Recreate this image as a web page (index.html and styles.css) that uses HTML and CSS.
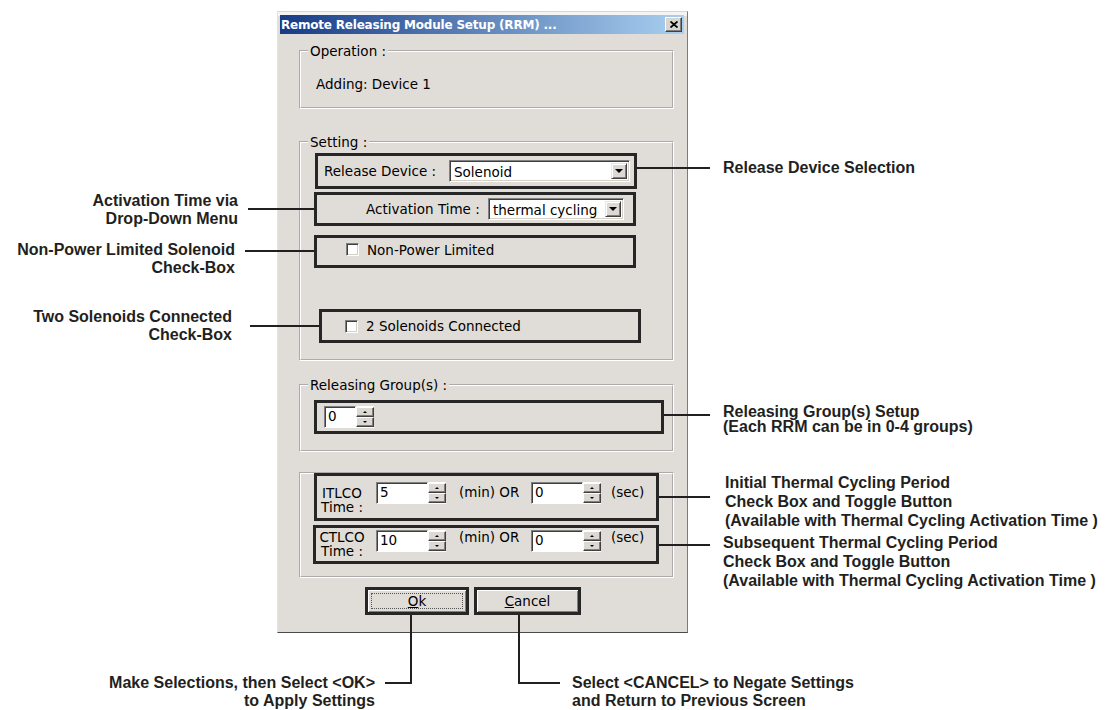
FILE: index.html
```html
<!DOCTYPE html>
<html>
<head>
  <title>Remote Releasing Module Setup (RRM)</title>
  <link rel="stylesheet" href="styles.css">
</head>
<body>
  <div class="figure">
    <div class="figure-row">
      <!--left notes-->
      <div class="notes-left">
        <p class="note note-act">Activation Time via<br>Drop-Down Menu</p>
        <p class="note note-npl">Non-Power Limited Solenoid<br>Check-Box</p>
        <p class="note note-two">Two Solenoids Connected<br>Check-Box</p>
      </div>

      <!--dialog-->
      <div class="dialog">
        <div class="titlebar">
          <span class="title">Remote Releasing Module Setup (RRM) ...</span>
          <span class="close-btn">
            <svg width="8" height="7" viewBox="0 0 8 7"><path d="M0.5 0.5 L7.5 6.5 M7.5 0.5 L0.5 6.5" stroke="#000" stroke-width="1.8" fill="none"/></svg>
          </span>
        </div>

        <div class="dialog-body">
          <fieldset class="group group-op">
            <legend>Operation :</legend>
            <p class="op-text">Adding: Device 1</p>
          </fieldset>

          <fieldset class="group group-set">
            <legend>Setting :</legend>
            <div class="mark mark-device">
              <span>Release Device :</span>
              <div class="combo combo-device"><span class="combo-text">Solenoid</span><span class="combo-btn"></span></div>
            </div>
            <div class="mark mark-act">
              <span>Activation Time :</span>
              <div class="combo combo-act"><span class="combo-text">thermal cycling</span><span class="combo-btn"></span></div>
            </div>
            <div class="mark mark-npl">
              <span class="check"></span>
              <span>Non-Power Limited</span>
            </div>
            <div class="mark mark-two">
              <span class="check"></span>
              <span>2 Solenoids Connected</span>
            </div>
          </fieldset>

          <fieldset class="group group-rel">
            <legend>Releasing Group(s) :</legend>
            <div class="mark mark-grp">
              <div class="spin">
                <span class="spin-field">0</span>
                <span class="spin-btns"><span class="spin-btn spin-up"></span><span class="spin-btn spin-down"></span></span>
              </div>
            </div>
          </fieldset>

          <fieldset class="group group-time">
            <div class="mark mark-time mark-itl">
              <span class="time-label">ITLCO<br>Time :</span>
              <div class="spin spin-wide">
                <span class="spin-field">5</span>
                <span class="spin-btns"><span class="spin-btn spin-up"></span><span class="spin-btn spin-down"></span></span>
              </div>
              <span class="time-unit">(min) OR</span>
              <div class="spin spin-wide">
                <span class="spin-field">0</span>
                <span class="spin-btns"><span class="spin-btn spin-up"></span><span class="spin-btn spin-down"></span></span>
              </div>
              <span class="time-sec">(sec)</span>
            </div>
            <div class="mark mark-time mark-ctl">
              <span class="time-label">CTLCO<br>Time :</span>
              <div class="spin spin-wide">
                <span class="spin-field">10</span>
                <span class="spin-btns"><span class="spin-btn spin-up"></span><span class="spin-btn spin-down"></span></span>
              </div>
              <span class="time-unit">(min) OR</span>
              <div class="spin spin-wide">
                <span class="spin-field">0</span>
                <span class="spin-btns"><span class="spin-btn spin-up"></span><span class="spin-btn spin-down"></span></span>
              </div>
              <span class="time-sec">(sec)</span>
            </div>
          </fieldset>

          <div class="buttons">
            <span class="btn btn-ok"><span><u>O</u>k</span></span>
            <span class="btn btn-cancel"><span><u>C</u>ancel</span></span>
          </div>
        </div>
      </div><!--dialog-->

      <!--right notes-->
      <div class="notes-right">
        <p class="note note-dev">Release Device Selection</p>
        <p class="note note-grp">Releasing Group(s) Setup<br>(Each RRM can be in 0-4 groups)</p>
        <p class="note note-itl">Initial Thermal Cycling Period<br>Check Box and Toggle Button<br>(Available with Thermal Cycling Activation Time )</p>
        <p class="note note-ctl">Subsequent Thermal Cycling Period<br>Check Box and Toggle Button<br>(Available with Thermal Cycling Activation Time )</p>
      </div>
    </div>

    <!--bottom notes-->
    <div class="figure-bottom">
      <p class="note note-ok">Make Selections, then Select &lt;OK&gt;<br>to Apply Settings</p>
      <p class="note note-cancel">Select &lt;CANCEL&gt; to Negate Settings<br>and Return to Previous Screen</p>
    </div>
  </div>
</body>
</html>
```

FILE: styles.css
```css
html, body {
  margin: 0;
  padding: 0;
  background: #fff;
}
body {
  font-family: "DejaVu Sans", sans-serif;
  font-size: 13.5px;
  color: #000;
}
.figure-row {
  display: flex;
  align-items: flex-start;
}

/* notes */
.note {
  margin: 0;
  font-family: "Liberation Sans", Arial, sans-serif;
  font-weight: bold;
  font-size: 16px;
  line-height: 18px;
  color: #231f20;
  white-space: nowrap;
}
.notes-left {
  width: 277px;
  flex: none;
}
.notes-left .note {
  text-align: right;
}
.note-act {
  margin-top: 192px;
  padding-right: 39px;
}
.note-npl {
  margin-top: 13px;
  padding-right: 42px;
}
.note-two {
  margin-top: 31px;
  padding-right: 45px;
}
.notes-right {
  padding-left: 35px;
}
.note-dev {
  margin-top: 159px;
}
.note-grp {
  margin-top: 227px;
  line-height: 15px;
}
.note-itl {
  margin-top: 39px;
  padding-left: 2px;
  line-height: 19px;
}
.note-ctl {
  margin-top: 3px;
  line-height: 19px;
}
.figure-bottom {
  display: flex;
  margin-top: 41px;
}
.note-ok {
  width: 375px;
  text-align: right;
}
.note-cancel {
  margin-left: 197px;
}

/* dialog */
.dialog {
  width: 411px;
  flex: none;
  box-sizing: border-box;
  margin-top: 11px;
  border: 1px solid;
  border-color: #d6d6d6 #7a7a7a #4a4a4a #e4e4e4;
  background: #e0ddd8;
  box-shadow: inset 0 4px 0 #f4f4f4;
}
.titlebar {
  display: flex;
  align-items: center;
  justify-content: space-between;
  height: 19px;
  margin: 3px 3px 0 2px;
  padding-left: 1px;
  background: linear-gradient(to right, #173b85, #a9d0f0);
}
.title {
  color: #fff;
  font-weight: bold;
  font-size: 12px;
  letter-spacing: -0.2px;
}
.close-btn {
  display: flex;
  align-items: center;
  justify-content: center;
  box-sizing: border-box;
  width: 17px;
  height: 15px;
  margin-right: 2px;
  background: #d8d5d0;
  border: 1px solid;
  border-color: #fff #404040 #404040 #fff;
  box-shadow: inset -1px -1px 0 #808080;
}
.dialog-body {
  padding: 0 13px 17px 21px;
}

/* group boxes */
.group {
  margin: 0;
  padding: 0;
  min-width: 0;
  box-sizing: border-box;
  border: 2px groove #fff;
}
.group legend {
  margin-left: 7px;
  padding: 0 2px;
  line-height: 14px;
}
.group-op {
  height: 65px;
  margin-top: 10px;
}
.group-set {
  height: 226px;
  margin-top: 26px;
}
.group-rel {
  height: 74px;
  margin-top: 17px;
}
.group-time {
  height: 106px;
  margin-top: 20px;
}
.op-text {
  margin: 19px 0 0 15px;
  line-height: 14px;
}

/* highlight boxes */
.mark {
  position: relative;
  display: flex;
  align-items: center;
  box-sizing: border-box;
  border: 3px solid #262626;
}
.mark::after {
  content: "";
  position: absolute;
  border-top: 2px solid #231f20;
}
.mark-device {
  width: 322px;
  height: 36px;
  margin: 4px 0 0 14px;
  padding: 0 4px 0 6px;
  justify-content: space-between;
}
.mark-device::after {
  left: calc(100% + 3px);
  top: 11px;
  width: 73px;
}
.mark-act {
  width: 322px;
  height: 34px;
  margin: 3px 0 0 13px;
  padding: 0 9px 0 49px;
}
.mark-act .combo {
  margin-left: auto;
}
.mark-act::after {
  right: calc(100% + 3px);
  top: 13px;
  width: 66px;
}
.mark-npl {
  width: 322px;
  height: 33px;
  margin: 9px 0 0 13px;
  padding: 0 0 4px 29px;
}
.mark-npl::after {
  right: calc(100% + 3px);
  top: 12px;
  width: 69px;
}
.mark-two {
  width: 322px;
  height: 34px;
  margin: 41px 0 0 18px;
  padding-left: 23px;
}
.mark-two::after {
  right: calc(100% + 3px);
  top: 13px;
  width: 69px;
}
.mark-grp {
  width: 350px;
  height: 34px;
  margin: 8px 0 0 13px;
  padding-left: 7px;
}
.mark-grp::after {
  left: calc(100% + 3px);
  top: 11px;
  width: 46px;
}
.mark-time {
  align-items: flex-start;
}
.mark-itl {
  width: 345px;
  height: 48px;
  margin: -1px 0 0 13px;
  padding-top: 6px;
}
.mark-itl::after {
  left: calc(100% + 3px);
  top: 20px;
  width: 51px;
}
.mark-ctl {
  width: 346px;
  height: 39px;
  margin: 4px 0 0 12px;
  padding-top: 2px;
}
.mark-ctl::after {
  left: calc(100% + 3px);
  top: 16px;
  width: 51px;
}
.time-label {
  flex: none;
  width: 46px;
  margin: 4px 0 0 2px;
  text-align: center;
  line-height: 14px;
}
.mark-ctl .time-label {
  margin: 0 0 0 3px;
}
.mark-time .spin {
  margin-left: 11px;
}
.time-unit {
  flex: none;
  width: 72px;
  margin: 3px 0 0 13px;
  line-height: 14px;
}
.mark-time .time-unit + .spin {
  margin-left: 0;
}
.time-sec {
  margin: 3px 0 0 10px;
  line-height: 14px;
}
.mark-ctl .time-unit,
.mark-ctl .time-sec {
  margin-top: 0;
}

/* controls */
.combo {
  display: flex;
  flex: none;
  box-sizing: border-box;
  height: 22px;
  padding: 2px;
  background: #fff;
  border: 1px solid;
  border-color: #808080 #fff #fff #808080;
  box-shadow: inset 1px 1px 0 #404040, inset -1px -1px 0 #d4d0c8;
}
.combo-device {
  width: 181px;
}
.combo-act {
  width: 136px;
}
.combo-text {
  flex: 1;
  padding-left: 2px;
  line-height: 18px;
  white-space: nowrap;
}
.combo-btn {
  display: flex;
  align-items: center;
  justify-content: center;
  box-sizing: border-box;
  width: 16px;
  background: #dcd9d4;
  border: 1px solid;
  border-color: #e8e6e2 #404040 #404040 #e8e6e2;
  box-shadow: inset 1px 1px 0 #fff, inset -1px -1px 0 #808080;
}
.combo-btn::after {
  content: "";
  border-top: 4px solid #000;
  border-left: 4px solid transparent;
  border-right: 4px solid transparent;
}
.check {
  width: 13px;
  height: 13px;
  flex: none;
  box-sizing: border-box;
  margin-right: 8px;
  background: #fff;
  border: 1px solid;
  border-color: #808080 #fff #fff #808080;
  box-shadow: inset 1px 1px 0 #404040, inset -1px -1px 0 #d4d0c8;
}
.spin {
  display: flex;
  flex: none;
  height: 22px;
}
.spin-field {
  width: 32px;
  box-sizing: border-box;
  padding-left: 3px;
  line-height: 18px;
  background: #fff;
  border: 1px solid;
  border-color: #808080 #fff #fff #808080;
  box-shadow: inset 1px 1px 0 #404040;
}
.spin-wide .spin-field {
  width: 52px;
}
.spin-btns {
  display: flex;
  flex-direction: column;
  width: 18px;
  padding: 1px 0;
  box-sizing: border-box;
  background: #fff;
}
.spin-btn {
  flex: 1;
  display: flex;
  align-items: center;
  justify-content: center;
  box-sizing: border-box;
  background: #dcd9d4;
  border: 1px solid;
  border-color: #fff #404040 #404040 #fff;
  box-shadow: inset -1px -1px 0 #808080;
}
.spin-btn::after {
  content: "";
  border-left: 2px solid transparent;
  border-right: 2px solid transparent;
}
.spin-up::after {
  border-bottom: 2px solid #000;
}
.spin-down::after {
  border-top: 2px solid #000;
}

/* buttons */
.buttons {
  display: flex;
  gap: 5px;
  margin-top: 9px;
  padding-left: 66px;
}
.btn {
  position: relative;
  display: flex;
  align-items: center;
  justify-content: center;
  box-sizing: border-box;
  height: 28px;
  border: 3px solid #262626;
  background: #e0ddd8;
  box-shadow: inset 1px 1px 0 #fff, inset -1px -1px 0 #808080;
}
.btn-ok {
  width: 104px;
}
.btn-cancel {
  width: 107px;
}
.btn-ok::before {
  content: "";
  position: absolute;
  top: 3px;
  left: 3px;
  right: 3px;
  bottom: 3px;
  border: 1px dotted #555;
}
.btn::after {
  content: "";
  position: absolute;
  top: calc(100% + 3px);
  height: 67px;
  border-bottom: 2px solid #231f20;
}
.btn-ok::after {
  left: 17px;
  width: 25px;
  border-right: 2px solid #231f20;
}
.btn-cancel::after {
  left: 41px;
  width: 40px;
  border-left: 2px solid #231f20;
}
```
